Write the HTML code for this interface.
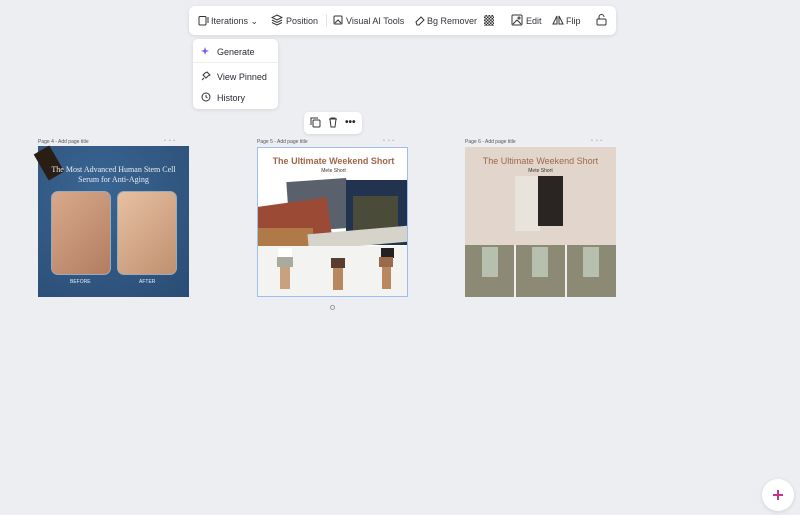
<!DOCTYPE html>
<html><head><meta charset="utf-8"><style>
*{margin:0;padding:0;box-sizing:border-box}
body{width:800px;height:515px;background:#edeef2;font-family:"Liberation Sans",sans-serif;position:relative;overflow:hidden;color:#2a2a33}
.a{position:absolute}
.tb{left:189px;top:6px;width:427px;height:29px;background:#fff;border-radius:6px;box-shadow:0 1px 4px rgba(0,0,0,.1);font-size:9px;color:#33333d}
.tb span{position:absolute;top:10px;white-space:nowrap}
.dd{left:193px;top:39px;width:85px;height:70px;background:#fff;border-radius:5px;box-shadow:0 1px 4px rgba(0,0,0,.1);font-size:9px}
.dd span{position:absolute;left:24px}
.lbl{font-size:5px;color:#555;white-space:nowrap}
svg{position:absolute}
</style></head><body>

<div class="a tb">
 <svg style="left:9px;top:9px" width="11" height="11" viewBox="0 0 11 11" fill="none" stroke="#333" stroke-width="1"><rect x="1" y="1.5" width="7" height="8.5" rx="1"/><path d="M10 2v6"/></svg>
 <span style="left:22px">Iterations ⌄</span>
 <svg style="left:82px;top:8px" width="12" height="12" viewBox="0 0 12 12" fill="none" stroke="#333" stroke-width="1"><path d="M6 1L11 3.5 6 6 1 3.5z"/><path d="M1 6l5 2.5L11 6M1 8.5l5 2.5 5-2.5"/></svg>
 <span style="left:97px">Position</span>
 <div class="a" style="left:137px;top:8px;width:1px;height:13px;background:#e4e4e8"></div>
 <svg style="left:144px;top:9px" width="10" height="10" viewBox="0 0 10 10" fill="none" stroke="#333" stroke-width="1"><rect x="1" y="1" width="8" height="8" rx="1"/><path d="M2 8l3-3 3 3"/></svg>
 <span style="left:157px">Visual AI Tools</span>
 <svg style="left:225px;top:9px" width="11" height="11" viewBox="0 0 11 11" fill="none" stroke="#333" stroke-width="1"><path d="M2 7l5-5 3 3-5 5H3z"/></svg>
 <span style="left:238px">Bg Remover</span>
 <div class="a" style="left:295px;top:9px;width:10px;height:11px;background:repeating-conic-gradient(#333 0 25%,#ddd 0 50%) 0 0/3px 3px"></div>
 <svg style="left:322px;top:8px" width="12" height="12" viewBox="0 0 12 12" fill="none" stroke="#333" stroke-width="1"><rect x="1" y="1" width="10" height="10" rx="1"/><path d="M2 10l4-4 4 4"/><circle cx="8" cy="4" r="1"/></svg>
 <span style="left:337px">Edit</span>
 <svg style="left:363px;top:8px" width="12" height="12" viewBox="0 0 12 12" fill="none" stroke="#333" stroke-width="1"><path d="M5 2L1 10h4zM7 2l4 8H7z"/></svg>
 <span style="left:377px">Flip</span>
 <svg style="left:407px;top:8px" width="11" height="12" viewBox="0 0 11 12" fill="none" stroke="#333" stroke-width="1"><rect x="1" y="5" width="9" height="6" rx="1"/><path d="M3 5V3a2.5 2.5 0 0 1 5 0"/></svg>
</div>

<div class="a dd">
 <svg style="left:8px;top:7px" width="10" height="10" viewBox="0 0 10 10" fill="#7a5cf0"><path d="M4 1l1 3 3 1-3 1-1 3-1-3-3-1 3-1z"/></svg>
 <span style="top:8px">Generate</span>
 <div class="a" style="left:0;top:23px;width:85px;height:1px;background:#eee"></div>
 <svg style="left:8px;top:32px" width="10" height="10" viewBox="0 0 10 10" fill="none" stroke="#333" stroke-width="1"><path d="M6 1l3 3-2 1-2 2-3-3 2-2zM3 7L1 9"/></svg>
 <span style="top:33px">View Pinned</span>
 <svg style="left:8px;top:53px" width="10" height="10" viewBox="0 0 10 10" fill="none" stroke="#333" stroke-width="1"><circle cx="5" cy="5" r="4"/><path d="M5 3v2l1.5 1"/></svg>
 <span style="top:54px">History</span>
</div>

<!-- page labels -->
<div class="a lbl" style="left:38px;top:139px">Page 4 - Add page title</div>
<div class="a lbl" style="left:257px;top:139px">Page 5 - Add page title</div>
<div class="a lbl" style="left:465px;top:139px">Page 6 - Add page title</div>
<div class="a lbl" style="left:164px;top:138px;letter-spacing:3px">▫▫▫</div>
<div class="a lbl" style="left:383px;top:138px;letter-spacing:3px">▫▫▫</div>
<div class="a lbl" style="left:591px;top:138px;letter-spacing:3px">▫▫▫</div>

<!-- page 4 -->
<div class="a" style="left:38px;top:146px;width:151px;height:151px;background:#2f5580;background-image:radial-gradient(circle at 40% 30%,#3a6592,#2a4c74)">
 <div class="a" style="left:2px;top:2px;width:18px;height:30px;background:#2a1e14;transform:rotate(-30deg)"></div>
 <div class="a" style="left:0;top:19px;width:151px;text-align:center;font-family:'Liberation Serif',serif;font-size:8px;color:#e8eef4;line-height:10px">The Most Advanced Human Stem Cell<br>Serum for Anti-Aging</div>
 <div class="a" style="left:13px;top:45px;width:60px;height:84px;border-radius:7px;background:linear-gradient(135deg,#d9a98c,#b27d62);border:1px solid #9ab"></div>
 <div class="a" style="left:79px;top:45px;width:60px;height:84px;border-radius:7px;background:linear-gradient(135deg,#e6c0a2,#c09070);border:1px solid #9ab"></div>
 <div class="a" style="left:32px;top:133px;font-size:5px;color:#e8eef4">BEFORE</div>
 <div class="a" style="left:101px;top:133px;font-size:5px;color:#e8eef4">AFTER</div>
</div>

<!-- toolbar small -->
<div class="a" style="left:304px;top:112px;width:58px;height:22px;background:#fff;border-radius:5px;box-shadow:0 1px 3px rgba(0,0,0,.1)">
 <svg style="left:6px;top:5px" width="11" height="11" viewBox="0 0 11 11" fill="none" stroke="#333" stroke-width="1"><rect x="3" y="3" width="7" height="7" rx="1"/><path d="M1 8V1h7"/></svg>
 <svg style="left:24px;top:5px" width="10" height="11" viewBox="0 0 10 11" fill="none" stroke="#333" stroke-width="1"><path d="M1 2h8M3 2V1h4v1M2 2l1 8h4l1-8"/></svg>
 <div class="a" style="left:41px;top:5px;font-size:10px;font-weight:bold">•••</div>
</div>

<!-- page 5 -->
<div class="a" style="left:257px;top:147px;width:151px;height:150px;background:#fff;border:1px solid #9fbdf0;overflow:hidden">
 <div class="a" style="left:0;top:8px;width:151px;text-align:center;font-size:9px;color:#a0674a;font-weight:bold">The Ultimate Weekend Short</div>
 <div class="a" style="left:0;top:20px;width:151px;text-align:center;font-size:5px;color:#333">Mete Short</div>
 <div class="a" style="left:30px;top:32px;width:60px;height:50px;background:#5a606c;transform:rotate(-4deg)"></div>
 <div class="a" style="left:88px;top:32px;width:63px;height:65px;background:#22334f"></div>
 <div class="a" style="left:95px;top:48px;width:45px;height:45px;background:#4a4b38"></div>
 <div class="a" style="left:0;top:54px;width:72px;height:45px;background:#9b4a36;transform:rotate(-8deg)"></div>
 <div class="a" style="left:0;top:80px;width:55px;height:20px;background:#b07a48"></div>
 <div class="a" style="left:50px;top:82px;width:101px;height:16px;background:#d6d3cb;transform:rotate(-5deg)"></div>
 <div class="a" style="left:0;top:98px;width:151px;height:52px;background:#f3f3f1"></div>
 <div class="a" style="left:20px;top:100px;width:14px;height:10px;background:#fff"></div>
 <div class="a" style="left:19px;top:109px;width:16px;height:10px;background:#a8ab9d"></div>
 <div class="a" style="left:73px;top:110px;width:14px;height:10px;background:#5a3c30"></div>
 <div class="a" style="left:123px;top:100px;width:13px;height:10px;background:#222"></div>
 <div class="a" style="left:121px;top:109px;width:14px;height:10px;background:#9a6a4a"></div>
 <div class="a" style="left:22px;top:119px;width:10px;height:22px;background:#c9a080"></div>
 <div class="a" style="left:75px;top:120px;width:10px;height:22px;background:#b98860"></div>
 <div class="a" style="left:124px;top:119px;width:9px;height:22px;background:#b98860"></div>
</div>
<div class="a" style="left:330px;top:305px;width:5px;height:5px;border:1px solid #999;border-radius:50%"></div>

<!-- page 6 -->
<div class="a" style="left:465px;top:147px;width:151px;height:150px;background:#e2d6cc;overflow:hidden">
 <div class="a" style="left:0;top:9px;width:151px;text-align:center;font-size:9px;color:#a0674a">The Ultimate Weekend Short</div>
 <div class="a" style="left:0;top:21px;width:151px;text-align:center;font-size:5px;color:#333">Mete Short</div>
 <div class="a" style="left:50px;top:29px;width:25px;height:55px;background:#e9e4db"></div>
 <div class="a" style="left:73px;top:29px;width:25px;height:50px;background:#2a2522"></div>
 <div class="a" style="left:0;top:98px;width:151px;height:52px;background:#8c8a74"></div>
 <div class="a" style="left:49px;top:98px;width:2px;height:52px;background:#eee"></div>
 <div class="a" style="left:100px;top:98px;width:2px;height:52px;background:#eee"></div>
 <div class="a" style="left:17px;top:100px;width:16px;height:30px;background:#b7bfae"></div>
 <div class="a" style="left:67px;top:100px;width:16px;height:30px;background:#b7bfae"></div>
 <div class="a" style="left:118px;top:100px;width:16px;height:30px;background:#b7bfae"></div>
</div>

<!-- plus -->
<div class="a" style="left:762px;top:479px;width:32px;height:32px;border-radius:50%;background:#fff;box-shadow:0 1px 4px rgba(0,0,0,.12)">
 <div class="a" style="left:11px;top:15px;width:10px;height:1.5px;background:#c0368a"></div>
 <div class="a" style="left:15.3px;top:11px;width:1.5px;height:10px;background:#c0368a"></div>
</div>
</body></html>
